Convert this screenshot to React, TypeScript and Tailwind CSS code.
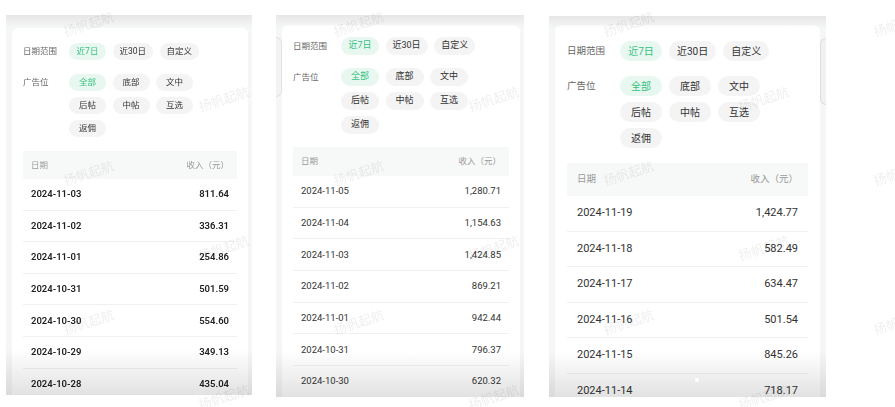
import React from "react";

type Row = { date: string; amount: string };

interface Sizing {
  panel: string;
  card: string;
  label: string;
  chip: string;
  chipGap: string;
  sectionGap: string;
  tableTop: string;
  header: string;
  row: string;
  rowText: string;
}

const DATE_CHIPS = ["近7日", "近30日", "自定义"];
const SLOT_CHIPS = ["全部", "底部", "文中", "后帖", "中帖", "互选", "返佣"];

const SIZES: Record<"one" | "two" | "three", Sizing> = {
  one: {
    panel: "ml-[6px] mt-[15px] h-[380px] w-[246px]",
    card: "ml-[6px] mr-[4px] mt-[13px] px-[11px] pt-[15px]",
    label: "w-[46px] text-[8.5px] leading-[17px]",
    chip: "h-[17px] min-w-[37px] px-[7px] text-[8.5px]",
    chipGap: "gap-x-[6.5px] gap-y-[6px] w-[140px]",
    sectionGap: "gap-[14px]",
    tableTop: "mt-[14px]",
    header: "h-[28px] px-[8px] text-[8.5px]",
    row: "h-[31.6px] px-[8px]",
    rowText: "text-[9.5px] font-semibold text-[#222]",
  },
  two: {
    panel: "ml-[24px] mt-[15px] h-[382px] w-[248px]",
    card: "ml-[6px] mr-[4px] mt-[10px] px-[11px] pt-[12px]",
    label: "w-[48px] text-[8.5px] leading-[18px]",
    chip: "h-[18px] min-w-[38px] px-[7px] text-[9px]",
    chipGap: "gap-x-[6.5px] gap-y-[6px] w-[140px]",
    sectionGap: "gap-[13px]",
    tableTop: "mt-[13px]",
    header: "h-[29px] px-[8px] text-[8.5px]",
    row: "h-[31.7px] px-[8px]",
    rowText: "text-[9.5px] text-[#333]",
  },
  three: {
    panel: "ml-[25px] mt-[16px] h-[381px] w-[277px]",
    card: "ml-[6px] mr-[6px] mt-[9px] px-[12px] pt-[16px]",
    label: "w-[53px] text-[9.5px] leading-[20px]",
    chip: "h-[20px] min-w-[42px] px-[8px] text-[10px]",
    chipGap: "gap-x-[7px] gap-y-[6px] w-[160px]",
    sectionGap: "gap-[15px]",
    tableTop: "mt-[15px]",
    header: "h-[33px] px-[10px] text-[9.5px]",
    row: "h-[35.5px] px-[10px]",
    rowText: "text-[11px] text-[#333]",
  },
};

const ROWS_ONE: Row[] = [
  { date: "2024-11-03", amount: "811.64" },
  { date: "2024-11-02", amount: "336.31" },
  { date: "2024-11-01", amount: "254.86" },
  { date: "2024-10-31", amount: "501.59" },
  { date: "2024-10-30", amount: "554.60" },
  { date: "2024-10-29", amount: "349.13" },
  { date: "2024-10-28", amount: "435.04" },
];

const ROWS_TWO: Row[] = [
  { date: "2024-11-05", amount: "1,280.71" },
  { date: "2024-11-04", amount: "1,154.63" },
  { date: "2024-11-03", amount: "1,424.85" },
  { date: "2024-11-02", amount: "869.21" },
  { date: "2024-11-01", amount: "942.44" },
  { date: "2024-10-31", amount: "796.37" },
  { date: "2024-10-30", amount: "620.32" },
];

const ROWS_THREE: Row[] = [
  { date: "2024-11-19", amount: "1,424.77" },
  { date: "2024-11-18", amount: "582.49" },
  { date: "2024-11-17", amount: "634.47" },
  { date: "2024-11-16", amount: "501.54" },
  { date: "2024-11-15", amount: "845.26" },
  { date: "2024-11-14", amount: "718.17" },
];

function Chip({ text, active, className }: { text: string; active?: boolean; className: string }) {
  return (
    <span
      className={`inline-flex items-center justify-center rounded-full ${className} ${
        active ? "bg-[#e8f8f0] text-[#34c07f]" : "bg-[#f4f4f4] text-[#333]"
      }`}
    >
      {text}
    </span>
  );
}

function Panel({
  size,
  rows,
  handle,
  dot,
}: {
  size: Sizing;
  rows: Row[];
  handle?: "left" | "right";
  dot?: string;
}) {
  return (
    <div className={`relative shrink-0 overflow-hidden bg-[#f5f6f6] ${size.panel}`}>
      <div className={`h-full rounded-t-[6px] bg-white ${size.card}`}>
        <div className={`flex flex-col ${size.sectionGap}`}>
          <div className="flex">
            <span className={`shrink-0 text-[#666] ${size.label}`}>日期范围</span>
            <div className={`flex flex-wrap ${size.chipGap}`}>
              {DATE_CHIPS.map((c, i) => (
                <Chip key={c} text={c} active={i === 0} className={size.chip} />
              ))}
            </div>
          </div>
          <div className="flex">
            <span className={`shrink-0 text-[#666] ${size.label}`}>广告位</span>
            <div className={`flex flex-wrap ${size.chipGap}`}>
              {SLOT_CHIPS.map((c, i) => (
                <Chip key={c} text={c} active={i === 0} className={size.chip} />
              ))}
            </div>
          </div>
        </div>

        <div className={size.tableTop}>
          <div className={`flex items-center justify-between bg-[#f7f8f8] text-[#999] ${size.header}`}>
            <span>日期</span>
            <span>收入（元）</span>
          </div>
          {rows.map((r) => (
            <div
              key={r.date}
              className={`flex items-center justify-between border-b border-[#f0f0f0] ${size.row} ${size.rowText}`}
            >
              <span>{r.date}</span>
              <span>{r.amount}</span>
            </div>
          ))}
        </div>
      </div>

      <div className="pointer-events-none absolute inset-x-0 top-0 h-[12px] bg-linear-to-b from-[#e6e6e6] to-transparent" />
      <div className="pointer-events-none absolute inset-x-0 bottom-0 h-[46px] bg-linear-to-b from-transparent to-[#e2e2e2] mix-blend-multiply" />

      {handle === "left" && (
        <div className="absolute left-0 top-[22px] h-[60px] w-[6px] rounded-r-[6px] border border-l-0 border-[#e2e2e2] bg-[#f3f3f3]" />
      )}
      {handle === "right" && (
        <div className="absolute right-0 top-[22px] h-[67px] w-[6px] rounded-l-[6px] border border-r-0 border-[#dedede] bg-[#f1f1f1]" />
      )}
      {dot && <div className={`absolute h-[4px] w-[4px] rounded-full bg-white ${dot}`} />}
    </div>
  );
}

export default function App() {
  const marks: { x: number; y: number }[] = [];
  for (let i = 0; i < 4; i++) {
    for (let j = 0; j < 3; j++) {
      marks.push({ x: 62 + i * 270, y: 13 + j * 149 });
      marks.push({ x: 197 + i * 270, y: 88 + j * 149 });
    }
  }

  return (
    <div className="relative h-[407px] w-[895px] overflow-hidden bg-white font-['Roboto','Noto_Sans_CJK_SC',sans-serif]">
      <div className="flex items-start">
        <Panel size={SIZES.one} rows={ROWS_ONE} />
        <Panel size={SIZES.two} rows={ROWS_TWO} handle="left" dot="left-[135px] top-[336px]" />
        <Panel size={SIZES.three} rows={ROWS_THREE} handle="right" dot="left-[146px] top-[362px]" />
      </div>

      {/* watermark */}
      <div className="pointer-events-none absolute inset-0">
        {marks.map((m, k) => (
          <span
            key={k}
            className="absolute flex h-[24px] w-[54px] items-center justify-center whitespace-nowrap text-[13px] text-black/[0.07] -rotate-[18deg]"
            style={{ left: m.x, top: m.y }}
          >
            扬帆起航
          </span>
        ))}
      </div>
    </div>
  );
}
